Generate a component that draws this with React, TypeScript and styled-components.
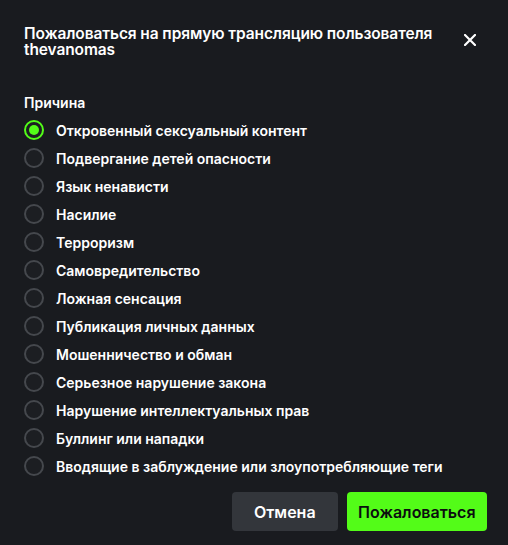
import * as React from 'react';
import { useState } from 'react';
import styled, { createGlobalStyle } from 'styled-components';

const GlobalStyle = createGlobalStyle`
  html, body {
    margin: 0;
    padding: 0;
    background: #191b1f;
  }
  body {
    font-family: Inter, "Noto Sans", sans-serif;
    -webkit-font-smoothing: antialiased;
  }
`;

const reasons = [
  'Откровенный сексуальный контент',
  'Подвергание детей опасности',
  'Язык ненависти',
  'Насилие',
  'Терроризм',
  'Самовредительство',
  'Ложная сенсация',
  'Публикация личных данных',
  'Мошенничество и обман',
  'Серьезное нарушение закона',
  'Нарушение интеллектуальных прав',
  'Буллинг или нападки',
  'Вводящие в заблуждение или злоупотребляющие теги',
];

const Dialog = styled.div`
  width: 508px;
  height: 545px;
  box-sizing: border-box;
  background: #191b1f;
  color: #ffffff;
  padding: 26px 21px 14px 24px;
  display: flex;
  flex-direction: column;
`;

const Header = styled.div`
  display: flex;
  align-items: center;
  justify-content: space-between;
  gap: 16px;
  padding-right: 7px;
`;

const Title = styled.h2`
  margin: 0;
  font-size: 15.5px;
  line-height: 16px;
  font-weight: 600;
  letter-spacing: -0.1px;
`;

const CloseButton = styled.button`
  width: 24px;
  height: 24px;
  padding: 0;
  border: 0;
  background: transparent;
  color: #ffffff;
  display: flex;
  align-items: center;
  justify-content: center;
  cursor: pointer;
  margin-bottom: 4px;
`;

const Label = styled.div`
  margin-top: 36px;
  font-size: 14px;
  line-height: 18px;
  font-weight: 600;
`;

const List = styled.div`
  margin-top: 4px;
  display: flex;
  flex-direction: column;
`;

const Row = styled.label`
  display: flex;
  align-items: center;
  gap: 12px;
  height: 28px;
  font-size: 14px;
  font-weight: 600;
  cursor: pointer;
`;

const Radio = styled.span<{ $checked: boolean }>`
  width: 20px;
  height: 20px;
  box-sizing: border-box;
  border-radius: 50%;
  border: 2px solid ${(p) => (p.$checked ? '#53fc18' : '#45484d')};
  background: #1c1e22;
  display: flex;
  align-items: center;
  justify-content: center;

  &::after {
    content: '';
    width: 10px;
    height: 10px;
    border-radius: 50%;
    background: ${(p) => (p.$checked ? '#53fc18' : 'transparent')};
  }
`;

const Footer = styled.div`
  margin-top: auto;
  display: flex;
  justify-content: flex-end;
  gap: 9px;
`;

const Button = styled.button<{ $primary?: boolean }>`
  height: 39px;
  padding: 0 ${(p) => (p.$primary ? '11.5px' : '22px')};
  border: 0;
  border-radius: 4px;
  font-family: inherit;
  font-size: 16px;
  font-weight: 600;
  background: ${(p) => (p.$primary ? '#53fc18' : '#33363b')};
  color: ${(p) => (p.$primary ? '#0b0e0f' : '#ffffff')};
  cursor: pointer;
`;

const App = () => {
  const [selected, setSelected] = useState(0);

  return (
    <>
      <GlobalStyle />
      <Dialog>
        <Header>
          <Title>Пожаловаться на прямую трансляцию пользователя thevanomas</Title>
          <CloseButton aria-label="Закрыть">
            <svg width="12" height="12" viewBox="0 0 12 12" fill="none">
              <path d="M1 1L11 11M11 1L1 11" stroke="currentColor" strokeWidth="2.2" strokeLinecap="square" />
            </svg>
          </CloseButton>
        </Header>
        <Label>Причина</Label>
        <List>
          {reasons.map((reason, i) => (
            <Row key={reason} onClick={() => setSelected(i)}>
              <Radio $checked={selected === i} />
              {reason}
            </Row>
          ))}
        </List>
        <Footer>
          <Button>Отмена</Button>
          <Button $primary>Пожаловаться</Button>
        </Footer>
      </Dialog>
    </>
  );
};

export default App;
